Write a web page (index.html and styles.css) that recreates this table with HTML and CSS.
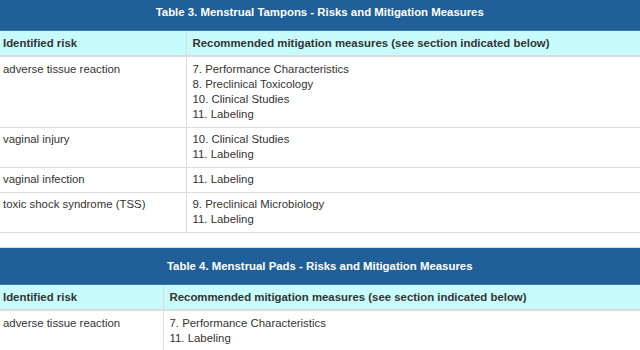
FILE: index.html
```html
<!DOCTYPE html>
<html>
<head>
<meta charset="utf-8">
<link rel="stylesheet" href="styles.css">
</head>
<body>
<div class="page">
  <table class="risk-table first">
    <colgroup><col class="c1-wide"><col></colgroup>
    <thead>
      <tr><th class="title" colspan="2">Table 3. Menstrual Tampons - Risks and Mitigation Measures</th></tr>
      <tr class="heads"><th>Identified risk</th><th>Recommended mitigation measures (see section indicated below)</th></tr>
    </thead>
    <tbody>
      <tr><td>adverse tissue reaction</td><td>7. Performance Characteristics<br>8. Preclinical Toxicology<br>10. Clinical Studies<br>11. Labeling</td></tr>
      <tr><td>vaginal injury</td><td>10. Clinical Studies<br>11. Labeling</td></tr>
      <tr><td>vaginal infection</td><td>11. Labeling</td></tr>
      <tr><td>toxic shock syndrome (TSS)</td><td>9. Preclinical Microbiology<br>11. Labeling</td></tr>
    </tbody>
  </table>

  <table class="risk-table second">
    <colgroup><col class="c1-narrow"><col></colgroup>
    <thead>
      <tr><th class="title" colspan="2">Table 4. Menstrual Pads - Risks and Mitigation Measures</th></tr>
      <tr class="heads"><th>Identified risk</th><th>Recommended mitigation measures (see section indicated below)</th></tr>
    </thead>
    <tbody>
      <tr><td>adverse tissue reaction</td><td>7. Performance Characteristics<br>11. Labeling</td></tr>
    </tbody>
  </table>
</div>
</body>
</html>
```

FILE: styles.css
```css
html, body {
  margin: 0;
  padding: 0;
  background: #ffffff;
}

body {
  font-family: "Liberation Sans", Arial, Helvetica, sans-serif;
  font-size: 11.4px;
  line-height: 15px;
  color: #333333;
  overflow: hidden;
}

.page {
  width: 646px;
  margin-left: -3px;
  margin-top: -7px;
}

.risk-table {
  width: 646px;
  border-collapse: collapse;
  table-layout: fixed;
}

.risk-table + .risk-table {
  margin-top: 14px;
}

.c1-wide { width: 189px; }
.c1-narrow { width: 166px; }

.risk-table th,
.risk-table td {
  text-align: left;
  vertical-align: top;
  padding: 4px 6px 5px 6px;
  border: 1px solid #dddddd;
  border-top: 0;
}

.risk-table tbody tr:first-child td {
  padding-top: 5px;
}

.risk-table td:first-child,
.risk-table th:first-child {
  border-left: 0;
}

.risk-table th.title {
  background: #215f99;
  color: #ffffff;
  text-align: center;
  font-weight: bold;
  line-height: 36px;
  padding: 0;
  vertical-align: middle;
  border: 0;
  border-top: 1px solid #d8dde3;
  border-bottom: 1px solid #3a78ad;
}

.heads th {
  background: #c8fcfc;
  color: #333333;
  font-weight: bold;
  padding: 5px 6px 4px 6px;
  border-bottom: 2px solid #dddddd;
}

.risk-table tbody td {
  color: #333333;
}
```
